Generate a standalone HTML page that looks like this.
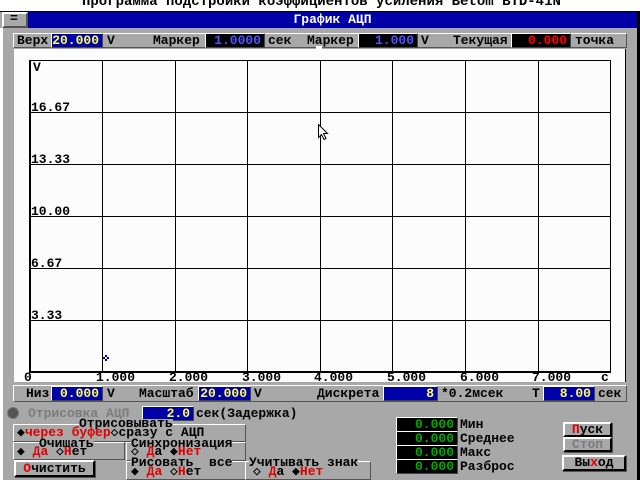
<!DOCTYPE html>
<html><head><meta charset="utf-8"><style>
*{margin:0;padding:0;box-sizing:border-box}
body{width:640px;height:480px;overflow:hidden;background:#a8a8a8;position:relative;font-family:"Liberation Mono","DejaVu Sans Mono",monospace;font-weight:bold;font-size:13px;color:#000}
.a{position:absolute;white-space:pre;line-height:12px}
.box{position:absolute;height:15px;border:1px solid #fff;border-right-color:#444;border-bottom-color:#444;line-height:13px;text-align:right;padding-right:3px;white-space:pre}
.bl{background:#0000a8;color:#ffff54}
.bk{background:#000;color:#5454ff}
.gr{background:#000;color:#00a800}
.bev{position:absolute;border:2px solid;border-color:#fff #545454 #545454 #fff}
.grp{position:absolute;border:1px solid;border-color:#fff #545454 #545454 #fff}
.lbl{position:absolute;background:#a8a8a8;line-height:9px;height:9px;white-space:pre;overflow:visible}
.r{color:#e00000}
.hl{position:absolute;height:1px;background:#000}
.vl{position:absolute;width:1px;background:#000}
.btn{position:absolute;background:#a8a8a8;border:2px solid;border-color:#fff #000 #000 #fff;text-align:center;line-height:11px;box-shadow:1px 1px 0 #545454}
</style></head><body>
<div class="a" style="left:0;top:0;width:640px;height:11px;background:#fff;overflow:hidden"><div style="position:absolute;left:82px;top:-4px;white-space:pre;font-size:14px">Программа подстройки коэффициентов усиления Betom BTD-41N</div></div>
<div class="a" style="left:0;top:11px;width:640px;height:1px;background:#000"></div>
<div class="bev" style="left:2px;top:12px;width:26px;height:16px;background:#a8a8a8"></div>
<div class="a" style="left:10px;top:13px">=</div>
<div class="a" style="left:28px;top:12px;width:609px;height:16px;background:#0000a8;color:#fff;text-align:center;line-height:16px">График АЦП</div>
<div class="a" style="left:637px;top:12px;width:3px;height:468px;background:#000"></div>
<div class="a" style="left:0;top:28px;width:3px;height:452px;background:#fff"></div>
<div class="grp" style="left:13px;top:33px;width:614px;height:15px"></div>
<div class="a" style="left:17px;top:35px">Верх</div>
<div class="box bl" style="left:51px;top:33px;width:52px;color:#ffff54">20.000</div>
<div class="a" style="left:107px;top:35px">V</div>
<div class="a" style="left:153px;top:35px">Маркер</div>
<div class="box bk" style="left:205px;top:33px;width:60px">1.0000</div>
<div class="a" style="left:268px;top:35px">сек</div>
<div class="a" style="left:307px;top:35px">Маркер</div>
<div class="box bk" style="left:358px;top:33px;width:60px">1.000</div>
<div class="a" style="left:421px;top:35px">V</div>
<div class="a" style="left:453px;top:35px">Текущая</div>
<div class="box" style="left:511px;top:33px;width:60px;background:#000;color:#f00">0.000</div>
<div class="a" style="left:575px;top:35px">точка</div>
<div class="a" style="left:14px;top:49px;width:612px;height:333px;background:#fcfcfc;border-right:1px solid #000"></div>
<div class="a" style="left:316px;top:46px;width:6px;height:3px;background:#fcfcfc"></div>
<div class="vl" style="left:29px;top:60px;height:312px;width:2px"></div>
<div class="hl" style="left:29px;top:60px;width:582px"></div>
<div class="hl" style="left:29px;top:371px;width:582px;height:2px"></div>
<div class="vl" style="left:102px;top:60px;height:312px"></div>
<div class="vl" style="left:175px;top:60px;height:312px"></div>
<div class="vl" style="left:247px;top:60px;height:312px"></div>
<div class="vl" style="left:320px;top:60px;height:312px"></div>
<div class="vl" style="left:392px;top:60px;height:312px"></div>
<div class="vl" style="left:465px;top:60px;height:312px"></div>
<div class="vl" style="left:538px;top:60px;height:312px"></div>
<div class="vl" style="left:610px;top:60px;height:312px"></div>
<div class="hl" style="left:29px;top:112px;width:582px"></div>
<div class="hl" style="left:29px;top:164px;width:582px"></div>
<div class="hl" style="left:29px;top:216px;width:582px"></div>
<div class="hl" style="left:29px;top:268px;width:582px"></div>
<div class="hl" style="left:29px;top:320px;width:582px"></div>
<div class="a" style="left:33px;top:62px">V</div>
<div class="a" style="left:31px;top:102px">16.67</div>
<div class="a" style="left:31px;top:154px">13.33</div>
<div class="a" style="left:31px;top:206px">10.00</div>
<div class="a" style="left:31px;top:258px">6.67</div>
<div class="a" style="left:31px;top:310px">3.33</div>
<div class="a" style="left:24px;top:372px">0</div>
<div class="a" style="left:96px;top:372px">1.000</div>
<div class="a" style="left:169px;top:372px">2.000</div>
<div class="a" style="left:242px;top:372px">3.000</div>
<div class="a" style="left:314px;top:372px">4.000</div>
<div class="a" style="left:387px;top:372px">5.000</div>
<div class="a" style="left:460px;top:372px">6.000</div>
<div class="a" style="left:532px;top:372px">7.000</div>
<div class="a" style="left:601px;top:372px">c</div>
<svg style="position:absolute;left:102px;top:355px" width="10" height="10"><path d="M3 0h2v2h-2zM1 2h2v2h-2zM5 2h2v2h-2zM3 4h2v2h-2z" fill="#0000a8"/></svg>
<svg style="position:absolute;left:318px;top:124px" width="12" height="18"><path d="M0.5 0.5v13l3-3 2.5 5 2-1-2.5-5h4z" fill="#fff" stroke="#000"/></svg>
<div class="grp" style="left:13px;top:385px;width:614px;height:17px"></div>
<div class="a" style="left:26px;top:388px">Низ</div>
<div class="box bl" style="left:51px;top:386px;width:52px">0.000</div>
<div class="a" style="left:107px;top:388px">V</div>
<div class="a" style="left:139px;top:388px">Масштаб</div>
<div class="box bl" style="left:198px;top:386px;width:53px">20.000</div>
<div class="a" style="left:254px;top:388px">V</div>
<div class="a" style="left:317px;top:388px">Дискрета</div>
<div class="box bl" style="left:383px;top:386px;width:55px">8</div>
<div class="a" style="left:441px;top:388px">*0.2мсек</div>
<div class="a" style="left:532px;top:388px">T</div>
<div class="box bl" style="left:543px;top:386px;width:52px">8.00</div>
<div class="a" style="left:598px;top:388px">сек</div>
<div class="a" style="left:7px;top:407px;width:12px;height:12px;border-radius:6px;background:#545454;border:1px solid #777"></div>
<div class="a" style="left:28px;top:408px;color:#7c7c7c">Отрисовка АЦП</div>
<div class="box bl" style="left:142px;top:406px;width:52px">2.0</div>
<div class="a" style="left:196px;top:408px">сек(Задержка)</div>
<div class="grp" style="left:13px;top:424px;width:233px;height:18px"></div>
<div class="lbl" style="left:79px;top:419px">Отрисовывать</div>
<div class="a" style="left:17px;top:427px">◆<span class="r">через буфер</span>◇сразу с АЦП</div>
<div class="grp" style="left:13px;top:442px;width:112px;height:18px"></div>
<div class="grp" style="left:126px;top:442px;width:120px;height:19px"></div>
<div class="grp" style="left:126px;top:461px;width:120px;height:19px"></div>
<div class="grp" style="left:245px;top:461px;width:126px;height:19px"></div>
<div class="lbl" style="left:39px;top:439px">Очищать</div>
<div class="a" style="left:17px;top:446px">◆ <span class="r">Да</span> ◇<span class="r">Н</span>ет</div>
<div class="btn" style="left:14px;top:460px;width:81px;height:17px;line-height:13px"><span class="r">О</span>чистить</div>
<div class="lbl" style="left:131px;top:439px">Синхронизация</div>
<div class="a" style="left:131px;top:446px">◇ <span class="r">Д</span>а ◆<span class="r">Нет</span></div>
<div class="lbl" style="left:131px;top:458px">Рисовать  все</div>
<div class="a" style="left:131px;top:466px">◆ <span class="r">Да</span> ◇<span class="r">Н</span>ет</div>
<div class="lbl" style="left:249px;top:458px">Учитывать знак</div>
<div class="a" style="left:253px;top:466px">◇ <span class="r">Д</span>а ◆<span class="r">Нет</span></div>
<div class="box gr" style="left:396px;top:417px;width:62px">0.000</div><div class="a" style="left:460px;top:419px">Мин</div>
<div class="box gr" style="left:396px;top:431px;width:62px">0.000</div><div class="a" style="left:460px;top:433px">Среднее</div>
<div class="box gr" style="left:396px;top:445px;width:62px">0.000</div><div class="a" style="left:460px;top:447px">Макс</div>
<div class="box gr" style="left:396px;top:459px;width:62px">0.000</div><div class="a" style="left:460px;top:461px">Разброс</div>
<div class="btn" style="left:563px;top:422px;width:49px;height:15px"><span class="r">П</span>уск</div>
<div class="btn" style="left:563px;top:437px;width:49px;height:15px;color:#7c7c7c">Стоп</div>
<div class="btn" style="left:562px;top:455px;width:64px;height:16px;line-height:12px">Вы<span class="r">х</span>од</div>
</body></html>
